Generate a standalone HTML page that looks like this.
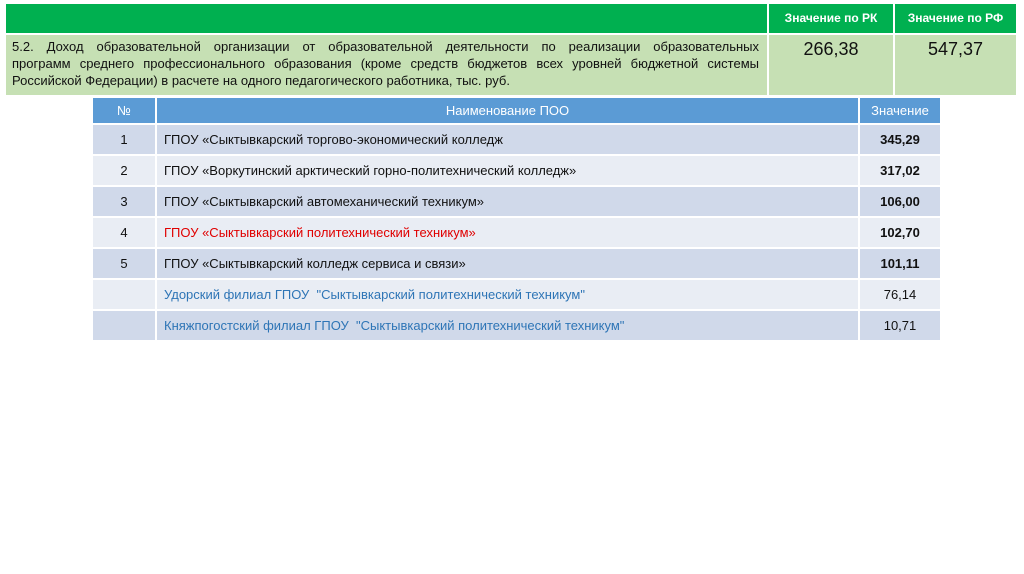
<!DOCTYPE html><html><head><meta charset="utf-8"><style>
body{margin:0;width:1024px;height:574px;background:#fff;font-family:"Liberation Sans",sans-serif;position:relative;overflow:hidden}
.a{position:absolute;box-sizing:border-box}
.g{background:#00b050;color:#fff;font-weight:bold;font-size:12px;text-align:center;line-height:29px}
.lg{background:#c6e0b4}
.t{font-size:13px;color:#111;line-height:17px;padding:3px 8px 0 6px}
.t div{text-align:justify;text-align-last:justify;white-space:nowrap}
.t div.l{text-align-last:left}
.n{font-size:18px;text-align:center;padding-top:4px;color:#111}
table{position:absolute;left:91px;top:96px;width:851px;border-collapse:collapse;font-size:13px}
td{border:2px solid #fff;height:29px;padding:0 7px;color:#111}
th{background:#5b9bd5;color:#fff;font-weight:normal;height:25px;border:2px solid #fff;padding:0;font-size:13px}
tr.o td{background:#d0d9ea}tr.e td{background:#e9edf4}
.c{text-align:center}.b{font-weight:bold;text-align:center}.r{color:#e00000}.bl{color:#2e75b6}
</style></head><body>
<div class="a g" style="left:6px;top:4px;width:761px;height:29px"></div>
<div class="a g" style="left:769px;top:4px;width:124px;height:29px">Значение по РК</div>
<div class="a g" style="left:895px;top:4px;width:121px;height:29px">Значение по РФ</div>
<div class="a lg t" style="left:6px;top:35px;width:761px;height:60px"><div style="white-space:normal">5.2. Доход образовательной организации от образовательной деятельности по реализации образовательных</div><div style="white-space:normal">программ среднего профессионального образования (кроме средств бюджетов всех уровней бюджетной системы</div><div class="l">Российской Федерации) в расчете на одного педагогического работника, тыс. руб.</div></div>
<div class="a lg n" style="left:769px;top:35px;width:124px;height:60px">266,38</div>
<div class="a lg n" style="left:895px;top:35px;width:121px;height:60px">547,37</div>
<table>
<tr><th style="width:62px">№</th><th>Наименование ПОО</th><th style="width:80px">Значение</th></tr>
<tr class="o"><td class="c">1</td><td>ГПОУ «Сыктывкарский торгово-экономический колледж</td><td class="b">345,29</td></tr>
<tr class="e"><td class="c">2</td><td>ГПОУ «Воркутинский арктический горно-политехнический колледж»</td><td class="b">317,02</td></tr>
<tr class="o"><td class="c">3</td><td>ГПОУ «Сыктывкарский автомеханический техникум»</td><td class="b">106,00</td></tr>
<tr class="e"><td class="c">4</td><td class="r">ГПОУ «Сыктывкарский политехнический техникум»</td><td class="b">102,70</td></tr>
<tr class="o"><td class="c">5</td><td>ГПОУ «Сыктывкарский колледж сервиса и связи»</td><td class="b">101,11</td></tr>
<tr class="e"><td></td><td class="bl">Удорский филиал ГПОУ&nbsp; "Сыктывкарский политехнический техникум"</td><td class="c">76,14</td></tr>
<tr class="o"><td></td><td class="bl">Княжпогостский филиал ГПОУ&nbsp; "Сыктывкарский политехнический техникум"</td><td class="c">10,71</td></tr>
</table>
</body></html>
